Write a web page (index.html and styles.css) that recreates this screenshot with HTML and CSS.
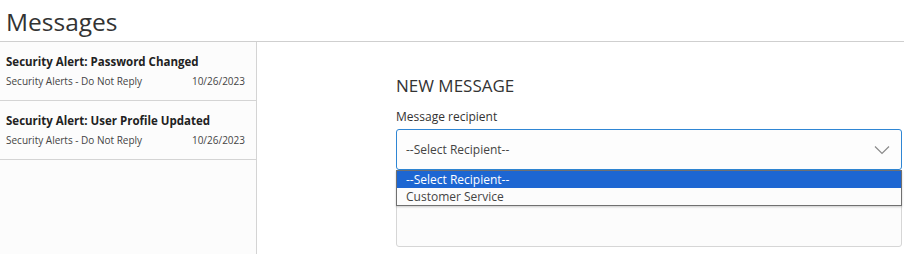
FILE: index.html
```html
<!DOCTYPE html>
<html lang="en">
<head>
  <meta charset="UTF-8" />
  <title>Messages</title>
  <link rel="stylesheet" href="styles.css">
</head>
<body>
  <h1 class="page-title">Messages</h1>
  <div class="layout">
    <div class="inbox">
      <div class="msg">
        <div class="msg-title">Security Alert: Password Changed</div>
        <div class="msg-meta">
          <span>Security Alerts - Do Not Reply</span>
          <span>10/26/2023</span>
        </div>
      </div>
      <div class="msg">
        <div class="msg-title">Security Alert: User Profile Updated</div>
        <div class="msg-meta">
          <span>Security Alerts - Do Not Reply</span>
          <span>10/26/2023</span>
        </div>
      </div>
    </div>
    <div class="compose">
      <h2>NEW MESSAGE</h2>
      <label class="field-label">Message recipient</label>
      <div class="select-wrap">
        <div class="select">
          <span>--Select Recipient--</span>
          <svg class="chevron" width="16" height="10" viewBox="0 0 16 10">
            <path d="M1 1.5 L8 8.5 L15 1.5" fill="none" stroke="#8a8a8a" stroke-width="1.2"/>
          </svg>
        </div>
        <ul class="options">
          <li class="selected">--Select Recipient--</li>
          <li>Customer Service</li>
        </ul>
      </div>
      <div class="textarea"></div>
    </div>
  </div>
</body>
</html>
```

FILE: styles.css
```css
body {
  margin: 0;
  font-family: "Open Sans", sans-serif;
  color: #333;
  background: #fff;
}
.page-title {
  margin: 0;
  height: 41px;
  padding-left: 6px;
  font-size: 24.5px;
  font-weight: 400;
  line-height: 44px;
  color: #333;
  border-bottom: 1px solid #cfcfcf;
}
.layout {
  display: flex;
  height: 212px;
}
.inbox {
  width: 256px;
  background: #fcfcfc;
  border-right: 1px solid #d4d4d4;
}
.msg {
  height: 59px;
  padding: 11px 11px 0 6px;
  box-sizing: border-box;
  border-bottom: 1px solid #d4d4d4;
}
.msg-title {
  font-size: 11.5px;
  font-weight: 700;
  color: #222;
  line-height: 17px;
}
.msg-meta {
  display: flex;
  justify-content: space-between;
  font-size: 10px;
  color: #444;
  margin-top: 4px;
}
.compose {
  flex: 1;
  padding: 32px 2px 0 139px;
}
.compose h2 {
  margin: 0;
  font-size: 17px;
  font-weight: 400;
  color: #333;
  line-height: 24px;
}
.field-label {
  display: block;
  margin-top: 11px;
  font-size: 12px;
  color: #333;
  line-height: 16px;
}
.select-wrap {
  position: relative;
  margin-top: 4px;
}
.select {
  height: 39px;
  border: 1px solid #2f86d4;
  border-radius: 3px;
  display: flex;
  align-items: center;
  justify-content: space-between;
  padding: 0 11px 0 9px;
  font-size: 12px;
  color: #444;
  background: #fdfdfd;
}
.options {
  position: absolute;
  top: 41px;
  left: 0;
  right: 0;
  margin: 0;
  padding: 0;
  list-style: none;
  border: 1px solid #707070;
  background: #fcfcfc;
  font-size: 12px;
  color: #444;
  box-shadow: 0 1px 2px rgba(0,0,0,0.2);
}
.options li {
  height: 17px;
  line-height: 17px;
  padding-left: 9px;
}
.options li.selected {
  background: #1d66d2;
  color: #fff;
}
.textarea {
  margin-top: 16px;
  height: 59px;
  border: 1px solid #d6d6d6;
  border-radius: 3px;
  background: #fcfcfc;
}
```
